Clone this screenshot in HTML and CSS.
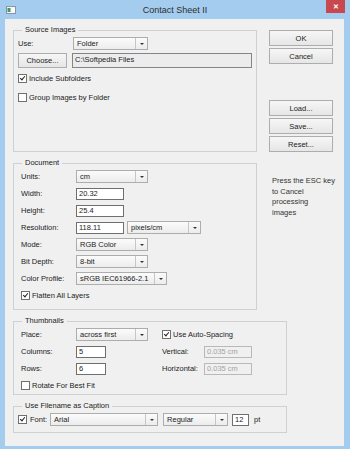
FILE: index.html
```html
<!DOCTYPE html>
<html lang="en">
<head>
    <meta charset="UTF-8">
    <meta name="viewport" content="width=device-width, initial-scale=1.0">
    <title>Contact Sheet II</title>
    <link rel="stylesheet" href="styles.css">
</head>
<body>

    <div class="window">
        <div class="titlebar">
            <svg class="app-icon" width="10" height="8" viewBox="0 0 10 8">
                <rect x="0.5" y="0.5" width="9" height="7" fill="#f4f6f8" stroke="#8796a4"/>
                <rect x="1.5" y="2" width="3" height="4" fill="#3c9a62"/>
                <rect x="5.5" y="2" width="3" height="4" fill="#ffffff"/>
            </svg>
            <span class="title">Contact Sheet II</span>
            <span class="close">&#x2715;</span>
        </div>

        <div class="content">
            <div class="top">
                <div class="left">
                    <fieldset class="group source">
                        <legend>Source Images</legend>
                        <div class="row">
                            <span class="label">Use:</span>
                            <div class="select w-folder"><span class="value">Folder</span><span class="arrow"></span></div>
                        </div>
                        <div class="row">
                            <button class="btn choose">Choose...</button>
                            <div class="path">C:\Softpedia Files</div>
                        </div>
                        <div class="row check-row"><span class="check on"></span>Include Subfolders</div>
                        <div class="row check-row"><span class="check"></span>Group Images by Folder</div>
                    </fieldset>

                    <fieldset class="group document">
                        <legend>Document</legend>
                        <div class="row">
                            <span class="label">Units:</span>
                            <div class="select w-std"><span class="value">cm</span><span class="arrow"></span></div>
                        </div>
                        <div class="row">
                            <span class="label">Width:</span>
                            <div class="field w-num">20.32</div>
                        </div>
                        <div class="row">
                            <span class="label">Height:</span>
                            <div class="field w-num">25.4</div>
                        </div>
                        <div class="row">
                            <span class="label">Resolution:</span>
                            <div class="field w-num">118.11</div>
                            <div class="select w-res"><span class="value">pixels/cm</span><span class="arrow"></span></div>
                        </div>
                        <div class="row">
                            <span class="label">Mode:</span>
                            <div class="select w-std"><span class="value">RGB Color</span><span class="arrow"></span></div>
                        </div>
                        <div class="row">
                            <span class="label">Bit Depth:</span>
                            <div class="select w-std"><span class="value">8-bit</span><span class="arrow"></span></div>
                        </div>
                        <div class="row">
                            <span class="label">Color Profile:</span>
                            <div class="select w-profile"><span class="value">sRGB IEC61966-2.1</span><span class="arrow"></span></div>
                        </div>
                        <div class="row"><span class="check on"></span>Flatten All Layers</div>
                    </fieldset>
                </div>

                <div class="right">
                    <button class="btn side">OK</button>
                    <button class="btn side">Cancel</button>
                    <button class="btn side load">Load...</button>
                    <button class="btn side">Save...</button>
                    <button class="btn side">Reset...</button>
                    <p class="esc">Press the ESC key<br>to Cancel<br>processing<br>images</p>
                </div>
            </div>

            <fieldset class="group thumbs">
                <legend>Thumbnails</legend>
                <div class="thumbs-grid">
                    <span>Place:</span>
                    <div class="select w-std"><span class="value">across first</span><span class="arrow"></span></div>
                    <div class="span2"><span class="check on"></span>Use Auto-Spacing</div>

                    <span>Columns:</span>
                    <div class="field w-small">5</div>
                    <span>Vertical:</span>
                    <div class="field w-num disabled">0.035 cm</div>

                    <span>Rows:</span>
                    <div class="field w-small">6</div>
                    <span>Horizontal:</span>
                    <div class="field w-num disabled">0.035 cm</div>

                    <div class="span4"><span class="check"></span>Rotate For Best Fit</div>
                </div>
            </fieldset>

            <fieldset class="group caption">
                <legend>Use Filename as Caption</legend>
                <div class="row">
                    <span class="check on"></span>
                    <span>Font:</span>
                    <div class="select w-font"><span class="value">Arial</span><span class="arrow"></span></div>
                    <div class="select w-style"><span class="value">Regular</span><span class="arrow"></span></div>
                    <div class="field w-pt">12</div>
                    <span class="unit">pt</span>
                </div>
            </fieldset>
        </div>
    </div>

</body>
</html>
```

FILE: styles.css
```css
body {
    margin: 0;
    background: #a4ccef;
    font-family: "Liberation Sans", Arial, sans-serif;
    font-size: 7.5px;
    color: #222;
}
.window {
    width: 350px;
    height: 449px;
    display: flex;
    flex-direction: column;
}
.titlebar {
    height: 19px;
    display: grid;
    grid-template-columns: 1fr auto 1fr;
    align-items: center;
}
.app-icon {
    justify-self: start;
    margin-left: 6px;
    margin-top: 1px;
}
.title {
    font-size: 9px;
    color: #2e2e2e;
}
.close {
    justify-self: end;
    align-self: start;
    width: 19px;
    height: 13px;
    margin-right: 5px;
    background: #c9474f;
    color: #fff;
    font-size: 7px;
    font-weight: bold;
    display: flex;
    align-items: center;
    justify-content: center;
}
.content {
    flex: 1;
    margin: 0 6px 3px 5px;
    background: #f0f0f0;
}
.top {
    display: flex;
}
.left {
    margin-left: 8px;
    width: 244px;
}
.right {
    margin-left: 12px;
    width: 64px;
    padding-top: 11px;
    display: flex;
    flex-direction: column;
}

/* group boxes */
.group {
    margin: 6px 0 0;
    padding: 0 0 0 4px;
    border: 1px solid #d0d0d0;
    box-sizing: border-box;
    min-width: 0;
}
.group legend {
    margin-left: 4px;
    padding: 0 3px;
    line-height: 10px;
}
.source {
    height: 127px;
}
.document {
    height: 152px;
    padding-left: 7px;
}
.document legend {
    margin-left: 1px;
}
.thumbs {
    margin-left: 8px;
    width: 274px;
    height: 79px;
    padding-left: 7px;
}
.thumbs legend {
    margin-left: 1px;
}
.caption {
    margin-left: 8px;
    width: 274px;
    height: 32px;
}

.row {
    display: flex;
    align-items: center;
    height: 17px;
}
.check-row {
    height: 19px;
}
.label {
    width: 55px;
    flex: none;
}

/* controls */
.btn {
    font-family: inherit;
    font-size: 7.5px;
    color: #222;
    padding: 0;
    border: 1px solid #adadad;
    background: linear-gradient(#f6f6f6, #e6e6e6);
    box-sizing: border-box;
}
.side {
    width: 64px;
    height: 16px;
    margin-bottom: 2px;
}
.load {
    margin-top: 34px;
}
.choose {
    width: 49px;
    height: 15px;
}
.path {
    width: 180px;
    height: 15px;
    margin-left: 5px;
    box-sizing: border-box;
    border: 1px solid #858585;
    background: #ececec;
    padding: 1px 0 0 2px;
    line-height: 10px;
}
.select {
    display: flex;
    height: 13px;
    box-sizing: border-box;
    border: 1px solid #adadad;
    background: linear-gradient(#fbfbfb, #ececec);
}
.select .value {
    flex: 1;
    padding-left: 3px;
    line-height: 11px;
    white-space: nowrap;
    overflow: hidden;
}
.select .arrow {
    width: 11px;
    border-left: 1px solid #c6c6c6;
    display: flex;
    align-items: center;
    justify-content: center;
}
.select .arrow::after {
    content: "";
    border-left: 2px solid transparent;
    border-right: 2px solid transparent;
    border-top: 2px solid #333;
}
.w-folder { width: 75px; }
.w-std { width: 72px; }
.w-res { width: 74px; margin-left: 3px; }
.w-profile { width: 91px; }
.w-font { width: 108px; margin-left: 3px; }
.w-style { width: 65px; margin-left: 5px; }

.field {
    height: 12px;
    box-sizing: border-box;
    border: 1px solid #6f6f6f;
    background: #fff;
    padding-left: 2px;
    line-height: 10px;
}
.field.disabled {
    border-color: #b9b9b9;
    background: #f0f0f0;
    color: #a3a3a3;
}
.w-num { width: 48px; }
.w-small { width: 30px; }
.w-pt { width: 17px; margin-left: 4px; }
.unit {
    margin-left: 5px;
}

.check {
    display: inline-block;
    width: 9px;
    height: 9px;
    box-sizing: border-box;
    border: 1px solid #707070;
    background: #fff;
    margin-right: 2px;
    flex: none;
    position: relative;
}
.check.on::after {
    content: "";
    position: absolute;
    left: 2px;
    top: 0px;
    width: 2px;
    height: 4px;
    border: solid #222;
    border-width: 0 1.3px 1.3px 0;
    transform: rotate(40deg);
}

.thumbs-grid {
    display: grid;
    grid-template-columns: 55px 86px 42px 48px;
    grid-auto-rows: 17px;
    align-items: center;
}
.span2 {
    grid-column: span 2;
    display: flex;
    align-items: center;
}
.span4 {
    grid-column: span 4;
    display: flex;
    align-items: center;
}
.caption .check {
    margin-right: 3px;
}

.esc {
    margin: 22px 0 0 3px;
    line-height: 10.5px;
    color: #333;
    white-space: nowrap;
}
```
